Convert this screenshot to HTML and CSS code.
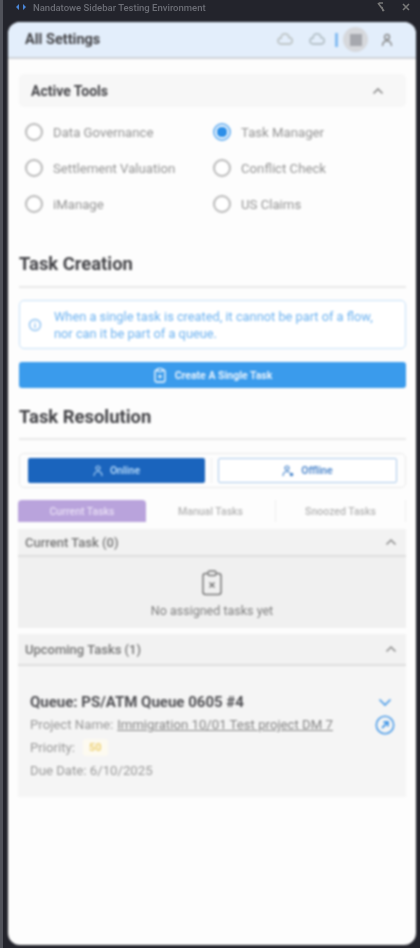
FILE: index.html
```html
<!DOCTYPE html>
<html lang="en">
<head>
    <meta charset="UTF-8">
    <meta name="viewport" content="width=device-width, initial-scale=1.0">
    <title>All Settings</title>
    <link rel="stylesheet" href="styles.css">
</head>
<body>
    <div class="titlebar">
        <svg class="app-icon" width="12" height="8" viewBox="0 0 12 8"><path d="M1 4l3-3v6zM11 4L8 1v6z" fill="#4a86d8"/></svg>
        <span class="app-title">Nandatowe Sidebar Testing Environment</span>
        <svg class="win-icon" width="10" height="10" viewBox="0 0 10 10"><path d="M2 1l6 8M3 1h4M7 9l-1-4" stroke="#777" stroke-width="1.6" fill="none"/></svg>
        <svg class="win-icon" width="10" height="10" viewBox="0 0 10 10"><path d="M2 2l6 6M8 2L2 8" stroke="#777" stroke-width="1.6"/></svg>
    </div>

    <div class="panel">
        <div class="panel-header">
            <h1>All Settings</h1>
            <div class="header-icons">
                <svg width="16" height="14" viewBox="0 0 16 14"><path d="M4 11a3 3 0 0 1 0-6 4 4 0 0 1 8-.5 3 3 0 0 1 0 6.500z" fill="none" stroke="#bfc6c8" stroke-width="1.800"/></svg>
                <svg width="16" height="14" viewBox="0 0 16 14"><path d="M4 11a3 3 0 0 1 0-6 4 4 0 0 1 8-.5 3 3 0 0 1 0 6.500z" fill="none" stroke="#b6c2c9" stroke-width="1.800"/></svg>
                <span class="icon-bar"></span>
                <span class="grid-btn"><span class="grid-square"></span></span>
                <svg class="user-icon" width="12" height="14" viewBox="0 0 12 14"><circle cx="6" cy="4" r="2.500" fill="none" stroke="#888" stroke-width="1.400"/><path d="M1.500 13c0-3.500 2-5 4.500-5s4.500 1.500 4.500 5" fill="none" stroke="#888" stroke-width="1.400"/></svg>
            </div>
        </div>

        <div class="panel-body">
            <div class="tools-head">
                <h2>Active Tools</h2>
                <svg width="12" height="8" viewBox="0 0 12 8"><path d="M1.500 6.500L6 2l4.500 4.500" fill="none" stroke="#8a8a8a" stroke-width="1.600"/></svg>
            </div>
            <div class="tools-grid">
                <label class="radio"><span class="dot"></span>Data Governance</label>
                <label class="radio on"><span class="dot"></span>Task Manager</label>
                <label class="radio"><span class="dot"></span>Settlement Valuation</label>
                <label class="radio"><span class="dot"></span>Conflict Check</label>
                <label class="radio"><span class="dot"></span>iManage</label>
                <label class="radio"><span class="dot"></span>US Claims</label>
            </div>

            <h2 class="section-title first">Task Creation</h2>
            <div class="info-box">
                <svg width="14" height="14" viewBox="0 0 14 14"><circle cx="7" cy="7" r="5.500" fill="none" stroke="#8fc2f2" stroke-width="1.400"/><path d="M7 6v4M7 4v1" stroke="#8fc2f2" stroke-width="1.400"/></svg>
                <p>When a single task is created, it cannot be part of a flow, nor can it be part of a queue.</p>
            </div>
            <button class="create-btn">
                <svg width="14" height="16" viewBox="0 0 14 16"><rect x="2" y="3" width="10" height="12" rx="1.500" fill="none" stroke="#fff" stroke-width="1.300"/><rect x="4.500" y="1.500" width="5" height="3" rx="1" fill="#3a9bec" stroke="#fff" stroke-width="1.200"/><path d="M7 7.500v4M5 9.500h4" stroke="#fff" stroke-width="1.200"/></svg>
                Create A Single Task
            </button>

            <h2 class="section-title">Task Resolution</h2>
            <div class="status-box">
                <button class="status-btn online">
                    <svg width="10" height="12" viewBox="0 0 10 12"><circle cx="5" cy="3" r="2" fill="none" stroke="#a9d0f5" stroke-width="1.200"/><path d="M1 11c0-3 2-4.500 4-4.500s4 1.500 4 4.500" fill="none" stroke="#a9d0f5" stroke-width="1.200"/></svg>
                    Online
                </button>
                <span class="status-sep"></span>
                <button class="status-btn offline">
                    <svg width="12" height="12" viewBox="0 0 12 12"><circle cx="5" cy="3" r="2" fill="none" stroke="#3f7fc8" stroke-width="1.200"/><path d="M1 11c0-3 2-4.500 4-4.500 1 0 2 .3 2.700 1" fill="none" stroke="#3f7fc8" stroke-width="1.200"/><circle cx="9.500" cy="9.500" r="1.800" fill="#3f7fc8"/></svg>
                    Offline
                </button>
            </div>

            <div class="task-tabs">
                <div class="task-tab active">Current Tasks</div>
                <div class="task-tab">Manual Tasks</div>
                <div class="task-tab">Snoozed Tasks</div>
            </div>

            <div class="acc-head">
                <h3>Current Task (0)</h3>
                <svg width="12" height="8" viewBox="0 0 12 8"><path d="M1.500 6.500L6 2l4.500 4.500" fill="none" stroke="#8a8a8a" stroke-width="1.500"/></svg>
            </div>
            <div class="acc-body empty">
                <svg width="22" height="26" viewBox="0 0 22 26"><rect x="2" y="3.500" width="18" height="21" rx="2.500" fill="none" stroke="#777" stroke-width="1.500"/><rect x="7" y="1" width="8" height="4.500" rx="1.500" fill="#efefef" stroke="#777" stroke-width="1.400"/><path d="M8.500 12.500l5 5M13.500 12.500l-5 5" stroke="#777" stroke-width="1.500"/></svg>
                <p>No assigned tasks yet</p>
            </div>

            <div class="acc-head upcoming">
                <h3>Upcoming Tasks (1)</h3>
                <svg width="12" height="8" viewBox="0 0 12 8"><path d="M1.500 6.500L6 2l4.500 4.500" fill="none" stroke="#8a8a8a" stroke-width="1.500"/></svg>
            </div>
            <div class="acc-body task">
                <div class="task-info">
                    <h4>Queue: PS/ATM Queue 0605 #4</h4>
                    <div class="task-line">Project Name: <a href="#">Immigration 10/01 Test project DM 7</a></div>
                    <div class="task-line">Priority: <span class="priority">50</span></div>
                    <div class="task-line">Due Date: 6/10/2025</div>
                </div>
                <div class="task-actions">
                    <svg width="14" height="9" viewBox="0 0 14 9"><path d="M1.500 1.500L7 7l5.500-5.500" fill="none" stroke="#4a9be8" stroke-width="1.700"/></svg>
                    <svg width="20" height="20" viewBox="0 0 20 20"><circle cx="10" cy="10" r="8.700" fill="none" stroke="#4a9be8" stroke-width="1.600"/><path d="M7 13l6-6M8.500 7H13v4.500" fill="none" stroke="#4a9be8" stroke-width="1.800"/></svg>
                </div>
            </div>
        </div>
    </div>
</body>
</html>
```

FILE: styles.css
```css
:root {
    --frame: #23242c;
    --blue: #3a9bec;
    --dark-blue: #1a64bd;
    --heading: #444448;
    --muted: #949494;
}

* {
    box-sizing: border-box;
}

html, body {
    height: 100%;
}

body {
    margin: 0;
    overflow: hidden;
    font-family: Roboto, sans-serif;
    background: var(--frame);
    border-left: 3px solid #50525a;
    display: flex;
    flex-direction: column;
}

h1, h2, h3, h4, p {
    margin: 0;
}

.titlebar {
    height: 22px;
    flex-shrink: 0;
    display: flex;
    align-items: center;
    gap: 6px;
    padding: 0 9px 8px 12px;
    filter: blur(0.6px);
}

.app-title {
    flex: 1;
    font-size: 9.500px;
    font-weight: 500;
    color: #6c6e76;
}

.win-icon {
    margin-left: 9px;
}

.panel {
    height: 923px;
    margin: 0 4px 0 5px;
    background: #fdfdfd;
    border-radius: 12px;
    overflow: hidden;
    filter: blur(0.8px);
}

.panel-header {
    height: 37px;
    display: flex;
    align-items: center;
    justify-content: space-between;
    padding: 0 23px 0 17px;
    background: #e3eefb;
    border-bottom: 2px solid #cfd3d8;
}

.panel-header h1 {
    font-size: 14.500px;
    font-weight: 700;
    color: var(--heading);
}

.header-icons {
    display: flex;
    align-items: center;
}

.header-icons svg {
    margin-right: 16px;
}

.header-icons .user-icon {
    margin: 0 0 0 13px;
}

.icon-bar {
    width: 3px;
    height: 14px;
    margin-left: -6px;
    background: #86bdf2;
}

.grid-btn {
    width: 25px;
    height: 25px;
    margin-left: 5px;
    border-radius: 50%;
    background: #d6d8dc;
    display: flex;
    align-items: center;
    justify-content: center;
}

.grid-square {
    width: 12px;
    height: 12px;
    background: #a6a8ae;
}

.panel-body {
    padding: 15px 10px 0 11px;
}

.tools-head {
    height: 33px;
    display: flex;
    align-items: center;
    justify-content: space-between;
    padding: 0 22px 0 12px;
    background: #f7f7f7;
    border-radius: 5px;
}

.tools-head h2 {
    font-size: 14px;
    font-weight: 700;
    color: var(--heading);
}

.tools-grid {
    display: grid;
    grid-template-columns: 188px 1fr;
    grid-auto-rows: 36px;
    padding: 7px 0 0 6px;
}

.radio {
    display: flex;
    align-items: center;
    gap: 10px;
    font-size: 13.200px;
    color: var(--muted);
}

.dot {
    width: 18px;
    height: 18px;
    border-radius: 50%;
    border: 2px solid #b8b8b8;
    background: #fff;
}

.radio.on .dot {
    border-color: #6fb4f2;
    background: radial-gradient(circle, #2d8fe8 0 5px, #fff 5.500px);
}

.section-title {
    margin-top: 18px;
    padding-bottom: 11px;
    font-size: 18.400px;
    line-height: 21px;
    font-weight: 700;
    color: var(--heading);
    border-bottom: 2px solid #e8e8e8;
}

.section-title.first {
    margin-top: 31px;
    padding-bottom: 12px;
}

.info-box {
    height: 49px;
    margin-top: 12px;
    display: flex;
    align-items: center;
    gap: 12px;
    padding: 0 20px 0 8px;
    background: #fff;
    border: 1.500px solid #c4dff8;
    border-radius: 5px;
    color: #6db2f0;
    font-size: 12.800px;
    line-height: 17px;
}

.info-box svg {
    flex-shrink: 0;
}

.create-btn {
    width: 100%;
    height: 26px;
    margin-top: 13px;
    border: none;
    border-radius: 3px;
    background: var(--blue);
    color: #e8f3fd;
    font-family: inherit;
    font-size: 10.500px;
    font-weight: 700;
    display: flex;
    align-items: center;
    justify-content: center;
    gap: 8px;
}

.status-box {
    height: 35px;
    margin-top: 13px;
    display: flex;
    align-items: center;
    gap: 6px;
    padding: 0 8px;
    border: 1px solid #e9e9e9;
    border-radius: 5px;
}

.status-btn {
    flex: 1;
    height: 25px;
    border-radius: 2px;
    font-family: inherit;
    font-size: 10.500px;
    font-weight: 700;
    display: flex;
    align-items: center;
    justify-content: center;
    gap: 7px;
}

.status-btn.online {
    border: none;
    background: var(--dark-blue);
    color: #a9d0f5;
}

.status-btn.offline {
    border: 1.500px solid #a9c8ea;
    background: #fff;
    color: #5a8fcf;
}

.status-sep {
    width: 1px;
    height: 25px;
    background: #eee;
}

.task-tabs {
    margin-top: 12px;
    margin-left: -1px;
    height: 22px;
    display: flex;
}

.task-tab {
    flex: 1;
    display: flex;
    align-items: center;
    justify-content: center;
    font-size: 10.500px;
    font-weight: 500;
    color: #b4b4b4;
    border-right: 1px solid #eee;
}

.task-tab.active {
    flex: 0 0 128px;
    background: #b9a3dc;
    color: #e8def5;
    border: none;
    border-radius: 4px 4px 0 0;
}

.acc-head {
    height: 28px;
    margin-top: 7px;
    margin-left: -1px;
    display: flex;
    align-items: center;
    justify-content: space-between;
    padding: 0 9px 0 7px;
    background: #f2f2f2;
    border-bottom: 2px solid #dedede;
}

.acc-head.upcoming {
    height: 32px;
    margin-top: 6px;
}

.acc-head h3 {
    font-size: 13px;
    font-weight: 500;
    color: #747474;
}

.acc-body {
    margin-left: -1px;
    background: #f0f0f0;
}

.acc-body.empty {
    height: 71px;
    padding-top: 13px;
    display: flex;
    flex-direction: column;
    align-items: center;
    gap: 7px;
    font-size: 12.500px;
    font-weight: 400;
    color: #808080;
}

.acc-body.task {
    height: 131px;
    display: flex;
    justify-content: space-between;
    padding: 27px 11px 0 12px;
    background: #f5f5f5;
}

.task-info h4 {
    font-size: 15px;
    line-height: 18px;
    font-weight: 700;
    color: #505054;
    margin-bottom: 2px;
}

.task-line {
    height: 23px;
    display: flex;
    align-items: center;
    gap: 4px;
    font-size: 13.200px;
    color: #989898;
}

.task-line a {
    color: #848484;
}

.priority {
    margin-left: 4px;
    padding: 2px 6px;
    background: #fdfaf0;
    border-radius: 3px;
    color: #eed277;
    font-size: 11px;
    font-weight: 700;
}

.task-actions {
    padding-top: 5px;
    display: flex;
    flex-direction: column;
    align-items: center;
    gap: 8px;
}
```
